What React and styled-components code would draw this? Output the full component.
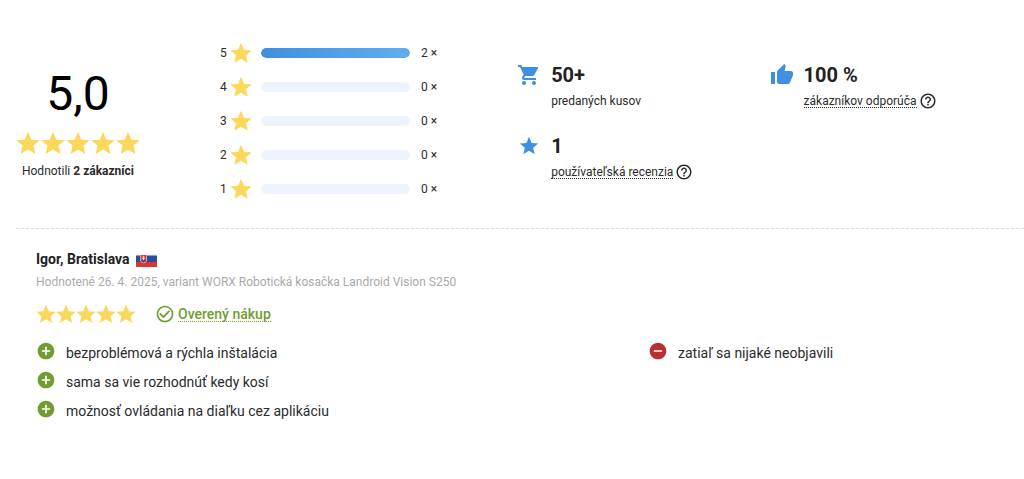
import React from 'react';
import styled, { createGlobalStyle } from 'styled-components';
import {
  MdShoppingCart,
  MdStar,
  MdThumbUp,
  MdHelpOutline,
  MdCheckCircleOutline,
  MdAddCircle,
  MdRemoveCircle,
} from 'react-icons/md';

const GlobalStyle = createGlobalStyle`
  * {
    box-sizing: border-box;
  }
  body {
    margin: 0;
    background: #fff;
    color: #2b2b2b;
    font-family: Roboto, "Liberation Sans", sans-serif;
    font-size: 12px;
    line-height: 16px;
  }
`;

const Page = styled.main`
  padding: 43px 0 32px 16px;
`;

const Summary = styled.section`
  display: flex;
  align-items: flex-start;
  padding-bottom: 29px;
  border-bottom: 1px dashed #dcdcdc;
`;

const Score = styled.div`
  display: flex;
  flex-direction: column;
  align-items: center;
  width: 124px;
  margin: 21px 80px 0 0;
`;

const ScoreValue = styled.div`
  color: #000;
  font-size: 48px;
  line-height: 60px;
  margin-bottom: 7px;
`;

const ScoreCaption = styled.div`
  margin-top: 8px;
  white-space: nowrap;
`;

const StarRow = styled.div`
  display: flex;
  gap: ${(props) => props.$gap || 0}px;
`;

const StarIcon = styled.svg`
  display: block;
  flex: none;
  width: ${(props) => props.$size}px;
  height: ${(props) => props.$size}px;
  fill: #fbd75b;
  stroke: #fbd75b;
  stroke-linejoin: round;
`;

const Histogram = styled.ul`
  display: flex;
  flex-direction: column;
  gap: 14px;
  margin: 0 80px 0 0;
  padding: 0;
  list-style: none;
`;

const HistogramRow = styled.li`
  display: flex;
  align-items: center;
  height: 20px;
`;

const Level = styled.span`
  width: 11px;
`;

const Track = styled.div`
  width: 149px;
  height: 10px;
  margin: 0 11px 0 10px;
  border-radius: 5px;
  background: #edf4fd;
  overflow: hidden;
`;

const Fill = styled.div`
  height: 100%;
  border-radius: 5px;
  background: linear-gradient(to right, #3f8fe0, #60aeee);
`;

const Stats = styled.div`
  display: grid;
  flex: 1;
  grid-template-columns: 1fr 1fr;
  row-gap: 24px;
  margin-top: 19px;
  padding-right: 2px;
`;

const Stat = styled.div`
  display: grid;
  grid-template-columns: 24px auto;
  justify-content: start;
  align-items: center;
  column-gap: 10px;
  color: #4090e2;

  > svg {
    justify-self: center;
  }
`;

const StatValue = styled.strong`
  color: #222;
  font-size: 20px;
  font-weight: 700;
  line-height: 26px;
`;

const StatLabel = styled.div`
  grid-column: 2;
  display: flex;
  align-items: center;
  gap: 2px;
  height: 16px;
  margin-top: 5px;
  color: #2b2b2b;
  white-space: nowrap;
`;

const HintLink = styled.a`
  color: inherit;
  line-height: 12px;
  text-decoration: none;
  border-bottom: 1px dotted currentColor;
`;

const Review = styled.article`
  padding: 21px 20px 0;
`;

const Author = styled.h3`
  display: flex;
  align-items: center;
  gap: 6px;
  margin: 0;
  color: #222;
  font-size: 14px;
  font-weight: 700;
  line-height: 16px;
`;

const Flag = styled.svg`
  display: block;
  width: 21px;
  height: 13px;
  margin-top: 4px;
`;

const Meta = styled.p`
  margin: 7px 0 14px;
  color: #aaa;
`;

const Rating = styled.div`
  display: flex;
  align-items: center;
  gap: 19px;
  height: 20px;
`;

const Verified = styled.div`
  display: flex;
  align-items: center;
  gap: 3px;
  color: #719c2f;
`;

const VerifiedLink = styled(HintLink)`
  font-size: 14px;
  font-weight: 500;
  line-height: 14px;
`;

const Opinions = styled.div`
  display: grid;
  grid-template-columns: 612px 1fr;
  margin-top: 17px;
`;

const OpinionList = styled.ul`
  display: flex;
  flex-direction: column;
  gap: 5px;
  margin: 0;
  padding: 0;
  list-style: none;
`;

const Opinion = styled.li`
  display: flex;
  gap: 10px;
  font-size: 14px;
  line-height: 24px;

  svg {
    flex: none;
    color: ${(props) => (props.$negative ? '#b8302f' : '#719c2f')};
  }
`;

const levels = [
  { stars: 5, count: 2 },
  { stars: 4, count: 0 },
  { stars: 3, count: 0 },
  { stars: 2, count: 0 },
  { stars: 1, count: 0 },
];

const total = levels.reduce((sum, level) => sum + level.count, 0);

const pros = [
  'bezproblémová a rýchla inštalácia',
  'sama sa vie rozhodnúť kedy kosí',
  'možnosť ovládania na diaľku cez aplikáciu',
];

const cons = ['zatiaľ sa nijaké neobjavili'];

const Star = ({ size, rounding = 0 }) => (
  <StarIcon viewBox="0 0 24 24" $size={size} strokeWidth={rounding} aria-hidden="true">
    <path d="M12 .8l3.300 7.900 8.500.5-6.400 5.400 2 8.300L12 18.400l-7.400 4.500 2-8.300L.2 9.200l8.500-.5z" />
  </StarIcon>
);

const Stars = ({ size, gap }) => (
  <StarRow $gap={gap}>
    {[1, 2, 3, 4, 5].map((n) => (
      <Star key={n} size={size} />
    ))}
  </StarRow>
);

const SlovakFlag = () => (
  <Flag viewBox="0 0 21 13" role="img" aria-label="Slovensko">
    <rect width="21" height="13" fill="#f3f4f8" />
    <rect y="1.5" width="21" height="6.500" fill="#2450a4" />
    <rect y="8" width="21" height="5" fill="#dc3530" />
    <path d="M4 .5h7v5c0 2-1.500 3-3.500 3.800C5.500 8.500 4 7.500 4 5.500z" fill="#fff" />
    <path d="M4.500 1h6v4.500c0 1.700-1.300 2.500-3 3.200-1.700-.7-3-1.500-3-3.200z" fill="#dc3530" />
    <path d="M7.500 1.800v5M6.300 3h2.400M5.900 4.600h3.200" stroke="#fff" strokeWidth=".7" />
    <path d="M5.300 7.100c.7-1 1.500-.8 2.200-.6.700-.2 1.500-.4 2.200.6L7.500 8.700z" fill="#2450a4" />
  </Flag>
);

const App = () => {
  return (
    <>
      <GlobalStyle />
      <Page>
        <Summary>
          <Score>
            <ScoreValue>5,0</ScoreValue>
            <Stars size={24} gap={1} />
            <ScoreCaption>
              Hodnotili <strong>2 zákazníci</strong>
            </ScoreCaption>
          </Score>

          <Histogram>
            {levels.map((level) => (
              <HistogramRow key={level.stars}>
                <Level>{level.stars}</Level>
                <Star size={20} rounding={1} />
                <Track>
                  <Fill style={{ width: `${(level.count / total) * 100}%` }} />
                </Track>
                <span>{level.count} ×</span>
              </HistogramRow>
            ))}
          </Histogram>

          <Stats>
            <Stat>
              <MdShoppingCart size={24} />
              <StatValue>50+</StatValue>
              <StatLabel>predaných kusov</StatLabel>
            </Stat>
            <Stat>
              <MdThumbUp size={24} />
              <StatValue>100 %</StatValue>
              <StatLabel>
                <HintLink href="#recommend">zákazníkov odporúča</HintLink>
                <MdHelpOutline size={18} />
              </StatLabel>
            </Stat>
            <Stat>
              <MdStar size={22} />
              <StatValue>1</StatValue>
              <StatLabel>
                <HintLink href="#reviews">používateľská recenzia</HintLink>
                <MdHelpOutline size={18} />
              </StatLabel>
            </Stat>
          </Stats>
        </Summary>

        <Review>
          <Author>
            Igor, Bratislava
            <SlovakFlag />
          </Author>
          <Meta>Hodnotené 26. 4. 2025, variant WORX Robotická kosačka Landroid Vision S250</Meta>
          <Rating>
            <Stars size={20} />
            <Verified>
              <MdCheckCircleOutline size={20} />
              <VerifiedLink href="#verified">Overený nákup</VerifiedLink>
            </Verified>
          </Rating>
          <Opinions>
            <OpinionList>
              {pros.map((text) => (
                <Opinion key={text}>
                  <MdAddCircle size={20} />
                  {text}
                </Opinion>
              ))}
            </OpinionList>
            <OpinionList>
              {cons.map((text) => (
                <Opinion key={text} $negative>
                  <MdRemoveCircle size={20} />
                  {text}
                </Opinion>
              ))}
            </OpinionList>
          </Opinions>
        </Review>
      </Page>
    </>
  );
};

export default App;
